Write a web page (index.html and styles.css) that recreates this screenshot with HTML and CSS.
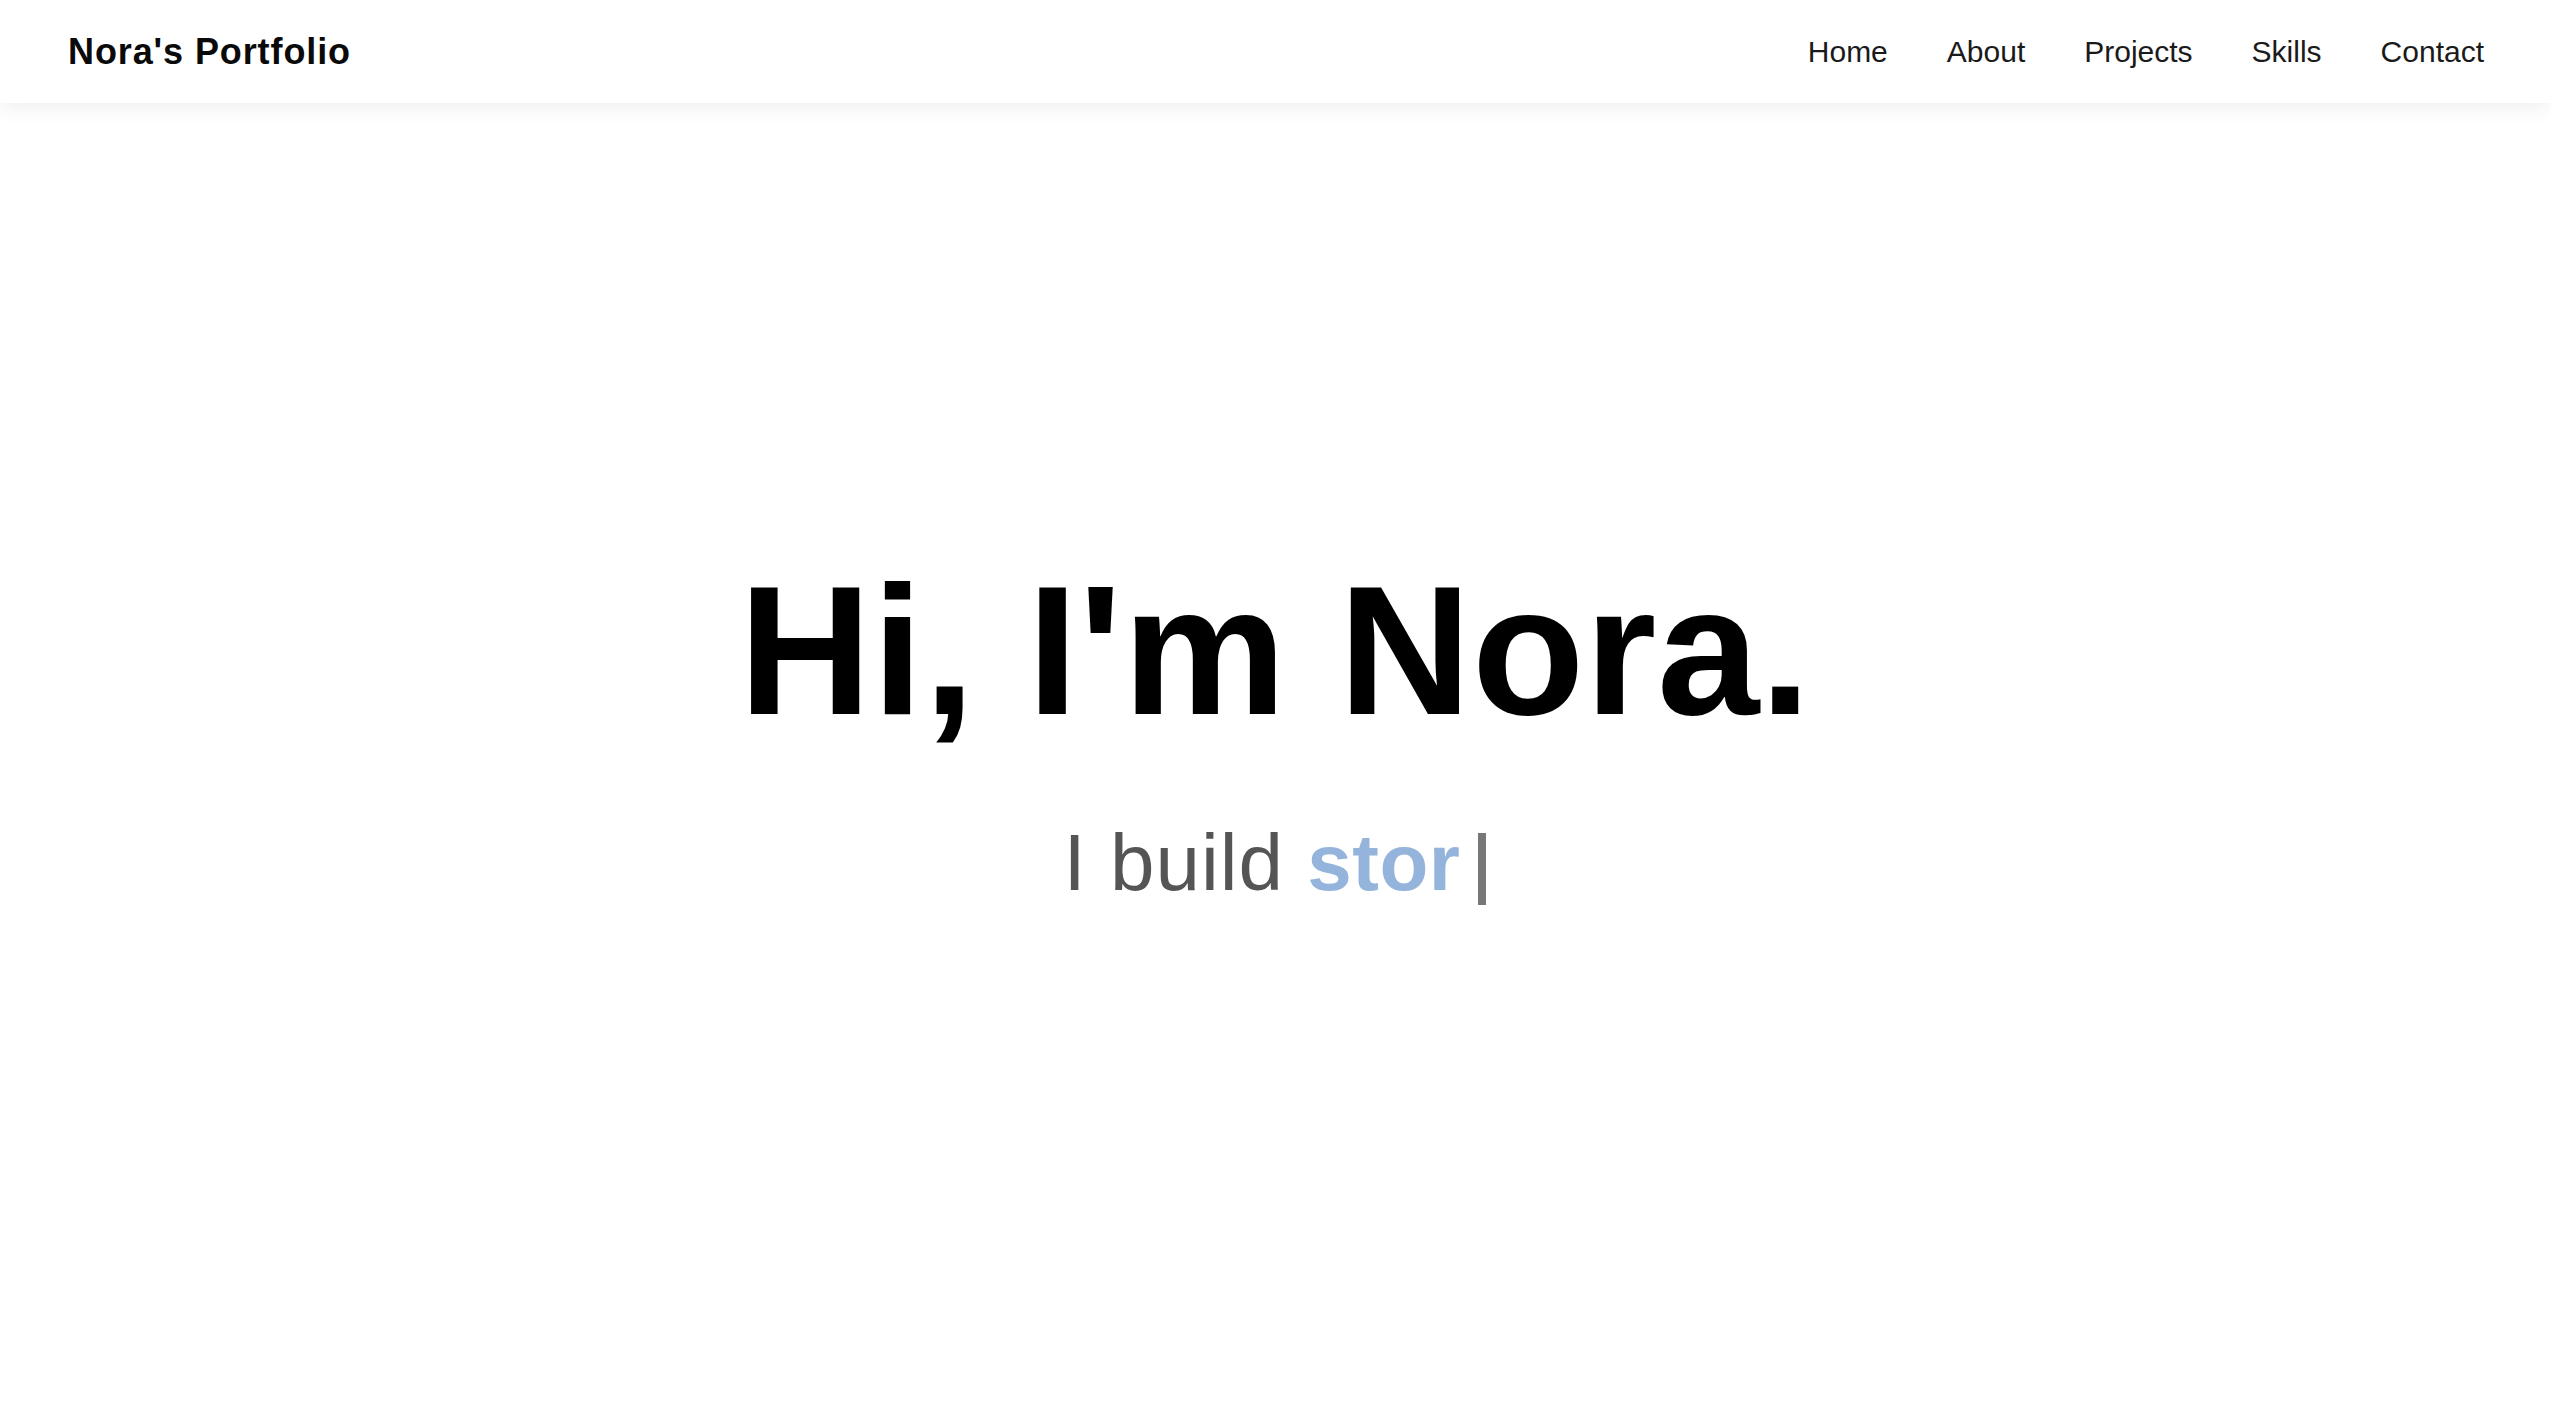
FILE: index.html
```html
<!DOCTYPE html>
<html lang="en">
<head>
<meta charset="utf-8">
<title>Nora's Portfolio</title>
<link rel="stylesheet" href="styles.css">
</head>
<body>
<header class="navbar">
  <a class="logo" href="#">Nora's Portfolio</a>
  <nav class="nav-links">
    <a href="#">Home</a>
    <a href="#">About</a>
    <a href="#">Projects</a>
    <a href="#">Skills</a>
    <a href="#">Contact</a>
  </nav>
</header>
<main class="hero">
  <div class="hero-content">
    <h1 class="hero-title">Hi, I'm Nora.</h1>
    <p class="hero-sub">I build <span class="typed">stor</span><span class="cursor"></span></p>
  </div>
</main>
</body>
</html>
```
FILE: styles.css
```css
html, body {
  margin: 0;
  padding: 0;
  background: #ffffff;
}
body {
  font-family: "Liberation Sans", Arial, sans-serif;
  color: #000;
}
.navbar {
  position: relative;
  z-index: 2;
  height: 103px;
  box-sizing: border-box;
  padding: 0 66px 0 68px;
  display: flex;
  align-items: center;
  justify-content: space-between;
  background: #fff;
  box-shadow: 0 4px 20px rgba(0, 0, 0, 0.07);
}
.logo {
  font-size: 36px;
  font-weight: 700;
  letter-spacing: 0.9px;
  color: #0a0a0a;
  text-decoration: none;
}
.nav-links {
  display: flex;
  gap: 59px;
}
.nav-links a {
  font-size: 30px;
  color: #1a1a1a;
  text-decoration: none;
}
.hero {
  height: calc(100vh - 103px);
  box-sizing: border-box;
  padding-bottom: 80px;
  display: flex;
  align-items: center;
  justify-content: center;
}
.hero-content {
  text-align: center;
}
.hero-title {
  margin: 0;
  font-size: 184px;
  line-height: 1.2;
  font-weight: 700;
  color: #000;
  letter-spacing: 0.5px;
}
.hero-sub {
  margin: 55px 0 0;
  font-size: 80px;
  line-height: 1.2;
  letter-spacing: 1px;
  color: #555555;
}
.typed {
  font-weight: 700;
  letter-spacing: 0.5px;
  color: #94b4dc;
}
.cursor {
  display: inline-block;
  width: 8px;
  height: 72px;
  margin-left: 18px;
  vertical-align: -15px;
  background: #777777;
}
```
